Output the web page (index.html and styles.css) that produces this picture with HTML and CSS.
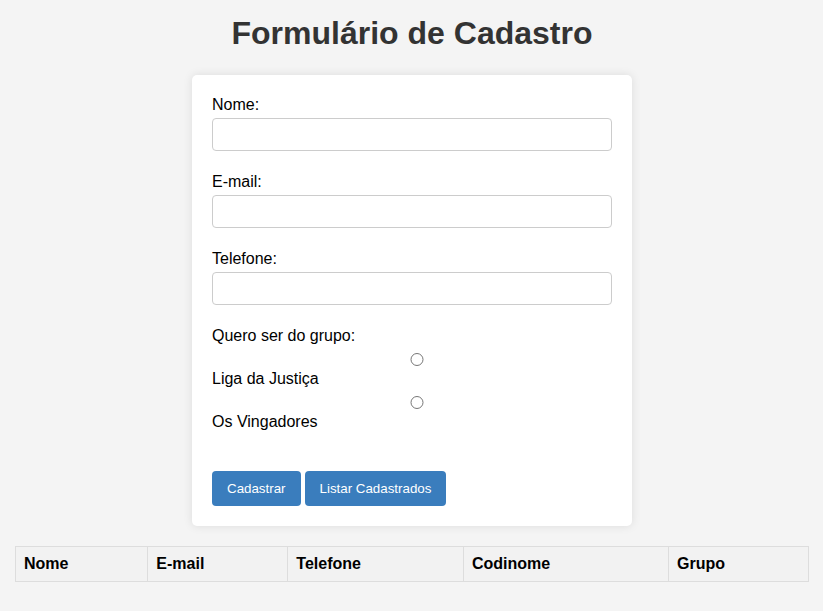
FILE: index.html
```html
<!DOCTYPE html>
<html lang="pt-BR">
<head>
<meta charset="utf-8">
<title>Formulário de Cadastro</title>
<link rel="stylesheet" href="styles.css">
</head>
<body>
<h1 class="title">Formulário de Cadastro</h1>
<form class="card">
  <div class="group">
    <label class="label" for="nome">Nome:</label>
    <input class="field" type="text" id="nome">
  </div>
  <div class="group">
    <label class="label" for="email">E-mail:</label>
    <input class="field" type="email" id="email">
  </div>
  <div class="group">
    <label class="label" for="tel">Telefone:</label>
    <input class="field" type="tel" id="tel">
  </div>
  <div class="group">
    <label class="label">Quero ser do grupo:</label>
    <input class="radio" type="radio" name="grupo" id="liga">
    <label class="radio-label" for="liga">Liga da Justiça</label>
    <input class="radio" type="radio" name="grupo" id="ving">
    <label class="radio-label" for="ving">Os Vingadores</label>
  </div>
  <div class="actions">
    <button class="btn" type="button">Cadastrar</button>
    <button class="btn" type="button">Listar Cadastrados</button>
  </div>
</form>
<table class="table">
  <thead>
    <tr><th>Nome</th><th>E-mail</th><th>Telefone</th><th>Codinome</th><th>Grupo</th></tr>
  </thead>
</table>
</body>
</html>
```
FILE: styles.css
```css
html, body {
  margin: 0;
  background: #f4f4f4;
}
body {
  padding: 15px 14px 15px 15px;
  font-family: "Liberation Sans", Arial, sans-serif;
  font-size: 16px;
  color: #000;
}
.title {
  margin: 0 0 23px;
  text-align: center;
  font-size: 32px;
  font-weight: bold;
  color: #333;
  line-height: 37px;
}
.card {
  width: 400px;
  margin: 0 auto;
  padding: 20px;
  background: #fff;
  border-radius: 5px;
  box-shadow: 0 0 10px rgba(0,0,0,0.1);
}
.group {
  margin-bottom: 21px;
}
.label {
  display: block;
  margin-bottom: 4px;
  line-height: 19px;
}
.field {
  display: block;
  box-sizing: border-box;
  width: 100%;
  height: 33px;
  margin: 0;
  padding: 8px;
  border: 1px solid #ccc;
  border-radius: 4px;
  font-family: "Liberation Sans", Arial, sans-serif;
  font-size: 13.33px;
  background: #fff;
}
.radio {
  display: block;
  width: 100%;
  height: 13px;
  margin: 7.5px 0 0 5px;
}
.radio-label {
  display: block;
  margin: 3.5px 0 0;
  line-height: 19px;
}
.actions {
  display: flex;
  gap: 4px;
  margin-top: 40px;
}
.btn {
  padding: 10px 15px;
  border: none;
  border-radius: 4px;
  background: #3a7dbd;
  color: #fff;
  font-family: "Liberation Sans", Arial, sans-serif;
  font-size: 13.33px;
  line-height: 15px;
  cursor: pointer;
}
.table {
  width: 100%;
  margin-top: 20px;
  border-collapse: collapse;
}
.table th {
  padding: 8px;
  border: 1px solid #ddd;
  background: #f2f2f2;
  text-align: left;
  font-weight: bold;
  line-height: 18px;
}
```
